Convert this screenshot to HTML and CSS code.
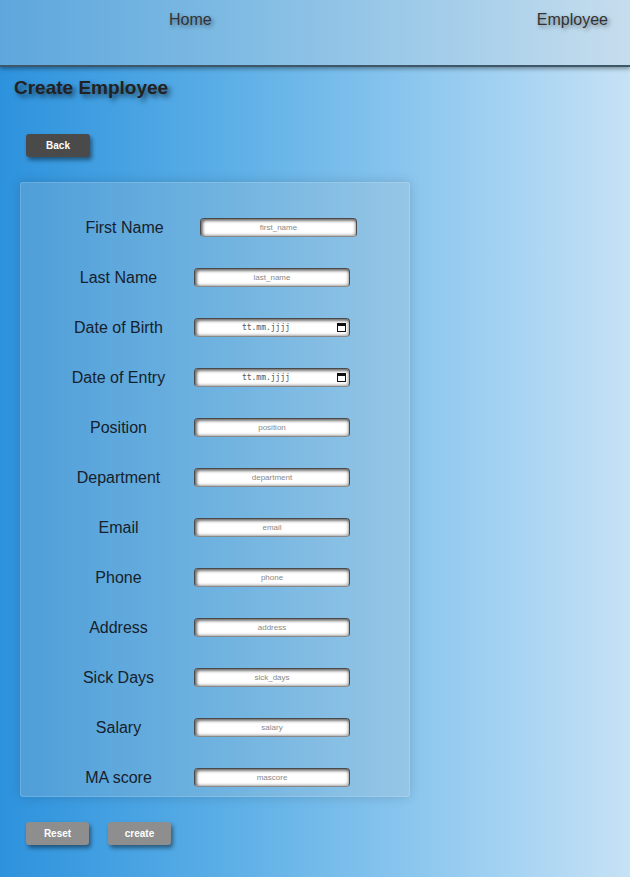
FILE: index.html
```html
<!DOCTYPE html>
<html lang="de">
<head>
<meta charset="utf-8">
<title>Create Employee</title>
<link rel="stylesheet" href="styles.css">
</head>
<body>
<header class="topbar">
  <nav class="nav">
    <a class="nav-link" href="#">Home</a>
    <a class="nav-link" href="#">Employee</a>
  </nav>
</header>
<main class="content">
  <h2 class="title">Create Employee</h2>
  <div class="back-row"><button class="btn btn-dark" type="button">Back</button></div>
  <form class="card">
    <div class="row row-first"><label class="label">First Name</label><input class="field" placeholder="first_name"></div>
    <div class="row"><label class="label">Last Name</label><input class="field" placeholder="last_name"></div>
    <div class="row"><label class="label">Date of Birth</label>
      <div class="field date-field"><span class="date-text">tt.mm.jjjj</span><svg class="cal" width="9" height="9" viewBox="0 0 9 9"><rect x="0.5" y="0.5" width="8" height="8" fill="none" stroke="#111" stroke-width="1"/><rect x="0.5" y="0.5" width="8" height="2.5" fill="#111"/></svg></div></div>
    <div class="row"><label class="label">Date of Entry</label>
      <div class="field date-field"><span class="date-text">tt.mm.jjjj</span><svg class="cal" width="9" height="9" viewBox="0 0 9 9"><rect x="0.5" y="0.5" width="8" height="8" fill="none" stroke="#111" stroke-width="1"/><rect x="0.5" y="0.5" width="8" height="2.5" fill="#111"/></svg></div></div>
    <div class="row"><label class="label">Position</label><input class="field" placeholder="position"></div>
    <div class="row"><label class="label">Department</label><input class="field" placeholder="department"></div>
    <div class="row"><label class="label">Email</label><input class="field" placeholder="email"></div>
    <div class="row"><label class="label">Phone</label><input class="field" placeholder="phone"></div>
    <div class="row"><label class="label">Address</label><input class="field" placeholder="address"></div>
    <div class="row"><label class="label">Sick Days</label><input class="field" placeholder="sick_days"></div>
    <div class="row"><label class="label">Salary</label><input class="field" placeholder="salary"></div>
    <div class="row"><label class="label">MA score</label><input class="field" placeholder="mascore"></div>
  </form>
  <div class="actions">
    <button class="btn btn-grey" type="button">Reset</button>
    <button class="btn btn-grey" type="button">create</button>
  </div>
</main>
</body>
</html>
```

FILE: styles.css
```css
* { box-sizing: border-box; }
html, body { margin: 0; padding: 0; }
body {
  width: 630px;
  height: 877px;
  overflow: hidden;
  font-family: "Liberation Sans", Arial, sans-serif;
  background: linear-gradient(90deg, #2d92dd 0%, #5aaee6 35%, #a3d2f2 80%, #c6e2f5 100%);
}
.topbar {
  height: 67px;
  background: rgba(200, 210, 220, 0.32);
  border-bottom: 2px solid #3d5668;
  box-shadow: 0 2px 4px rgba(0, 0, 0, 0.35);
}
.nav {
  display: flex;
  justify-content: space-between;
  padding: 11px 22px 0 169px;
}
.nav-link {
  font-size: 16px;
  color: #333;
  text-decoration: none;
  text-shadow: 2px 2px 4px rgba(0, 0, 0, 0.45);
}
.title {
  margin: 10px 0 0 14px;
  font-size: 19px;
  line-height: 22px;
  font-weight: bold;
  color: #222;
  text-shadow: 3px 3px 5px rgba(0, 0, 0, 0.6);
}
.back-row { padding: 35px 0 0 26px; }
.btn {
  width: 64px;
  height: 23px;
  border: none;
  border-radius: 3px;
  font-family: "Liberation Sans", Arial, sans-serif;
  font-size: 10px;
  font-weight: bold;
  color: #fff;
  box-shadow: 2px 3px 4px rgba(0, 0, 0, 0.45);
  padding: 0;
}
.btn-dark { background: #4a4a4a; }
.btn-grey { background: #8e8e8e; }
.card {
  margin: 25px 0 0 20px;
  width: 390px;
  height: 615px;
  padding: 35px 0 0 0;
  background: rgba(200, 200, 200, 0.2);
  border: 1px solid rgba(255, 255, 255, 0.15);
  border-radius: 3px;
  box-shadow: 0 0 12px rgba(0, 0, 0, 0.15);
  display: flex;
  flex-direction: column;
  gap: 31px;
}
.row {
  display: flex;
  align-items: center;
  height: 19px;
}
.label {
  flex: none;
  width: 173px;
  padding-left: 22px;
  text-align: center;
  font-size: 16px;
  color: #17212c;
}
.row-first .label { width: 179px; padding-left: 28px; }
.field {
  width: 156px;
  height: 19px;
  border: 1px solid #4a4a4a;
  border-bottom-color: #888;
  border-radius: 4px;
  background: #fff;
  box-shadow: inset 2px 2px 3px rgba(0, 0, 0, 0.55), inset -1px -1px 3px rgba(0, 0, 0, 0.35);
  font-family: "Liberation Sans", Arial, sans-serif;
  font-size: 8px;
  text-align: center;
  padding: 0;
  outline: none;
}
.field::placeholder { color: #888; }
.row-first .field { width: 157px; }
.date-field {
  display: flex;
  align-items: center;
  justify-content: center;
  position: relative;
}
.date-text {
  font-family: "DejaVu Sans Mono", "Liberation Mono", monospace;
  font-size: 8px;
  color: #555;
  margin-right: 12px;
}
.cal {
  position: absolute;
  right: 3px;
  top: 4px;
}
.actions {
  display: flex;
  gap: 19px;
  padding: 25px 0 0 26px;
}
.actions .btn { width: 63px; }
```
